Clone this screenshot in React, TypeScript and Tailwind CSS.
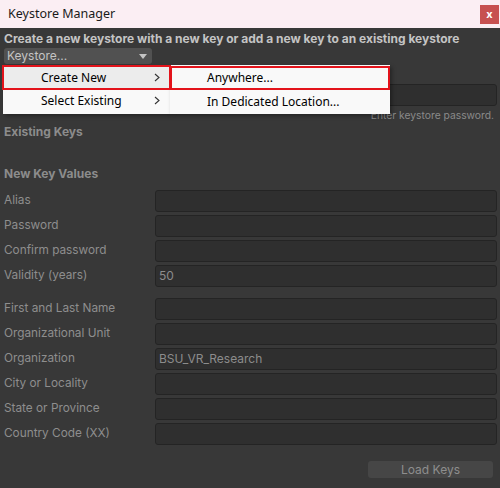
import React from "react";

const fieldsA = [
  { label: "Alias", value: "" },
  { label: "Password", value: "" },
  { label: "Confirm password", value: "" },
  { label: "Validity (years)", value: "50" },
];

const fieldsB = [
  { label: "First and Last Name", value: "" },
  { label: "Organizational Unit", value: "" },
  { label: "Organization", value: "BSU_VR_Research" },
  { label: "City or Locality", value: "" },
  { label: "State or Province", value: "" },
  { label: "Country Code (XX)", value: "" },
];

function Field({ value }: { value?: string }) {
  return (
    <div className="flex-1 h-[22px] rounded-[3px] bg-[#2f2f2f] border border-[#242424] flex items-center px-[3px] text-[12px] text-[#8c8c8c]">
      {value}
    </div>
  );
}

function Row({ label, value }: { label: string; value: string }) {
  return (
    <div className="flex items-center h-[22px]">
      <div className="w-[151px] text-[11.8px] text-[#8e8e8e]">{label}</div>
      <Field value={value} />
    </div>
  );
}

function Chevron() {
  return (
    <svg width="6" height="9" viewBox="0 0 6 9" className="text-[#333]">
      <path d="M1 1 L5 4.5 L1 8" fill="none" stroke="currentColor" strokeWidth="1.1" />
    </svg>
  );
}

export default function App() {
  return (
    <div
      className="w-[500px] h-[488px] bg-[#383838] flex flex-col relative overflow-hidden"
      style={{ fontFamily: "Inter, 'Noto Sans', sans-serif" }}
    >
      {/* title bar */}
      <div className="h-[28px] bg-[#fbeef3] flex items-center justify-between pl-[8px] shrink-0">
        <span className="text-[12.5px] text-[#1a1a1a]" style={{ fontFamily: "'Noto Sans', sans-serif" }}>
          Keystore Manager
        </span>
        <div className="w-[19px] h-[19px] mr-[1px] mt-[1px] bg-[#c75050] flex items-center justify-center text-white text-[11px] font-bold leading-none">
          x
        </div>
      </div>

      <div className="flex flex-col pl-[4px] pr-[3px]">
        <div className="mt-[3px] h-[16px] flex items-center text-[12px] font-bold text-[#c4c4c4] whitespace-nowrap">
          Create a new keystore with a new key or add a new key to an existing keystore
        </div>
        <div className="mt-[1px] w-[148px] h-[16px] rounded-[3px] bg-[#515151] flex items-center justify-between pl-[3px] pr-[5px] text-[12px] text-[#c4c4c4]">
          <span>Keystore...</span>
          <svg width="8" height="5" viewBox="0 0 8 5">
            <path d="M0 0 L8 0 L4 5 Z" fill="#c4c4c4" />
          </svg>
        </div>

        <div className="mt-[20px] flex items-center h-[22px]">
          <div className="w-[151px]" />
          <Field />
        </div>
        <div className="mt-[2px] text-right text-[10.3px] text-[#8a8a8a] pr-[3px] leading-[14px]">
          Enter keystore password.
        </div>

        <div className="mt-[2px] text-[12px] font-bold text-[#8c8c8c] leading-[16px]">Existing Keys</div>

        <div className="mt-[26px] text-[12px] font-bold text-[#8c8c8c] leading-[16px]">New Key Values</div>

        <div className="mt-[8px] flex flex-col gap-[3px]">
          {fieldsA.map((f) => (
            <Row key={f.label} label={f.label} value={f.value} />
          ))}
        </div>

        <div className="mt-[11px] flex flex-col gap-[3px]">
          {fieldsB.map((f) => (
            <Row key={f.label} label={f.label} value={f.value} />
          ))}
        </div>

        <div className="mt-[16px] flex justify-end pr-[4px]">
          <div className="w-[125px] h-[17px] rounded-[3px] bg-[#464646] flex items-center justify-center text-[12px] text-[#8e8e8e]">
            Load Keys
          </div>
        </div>
      </div>

      {/* context menu */}
      <div
        className="absolute left-[3px] top-[65px] flex text-[12px] text-black"
        style={{ fontFamily: "'Noto Sans', sans-serif" }}
      >
        <div className="w-[167px] bg-[#f9f9f9] py-[1px] shadow-[2px_2px_4px_rgba(0,0,0,0.35)] flex flex-col">
          <div className="relative h-[23px] bg-[#ececec] flex items-center pl-[38px] pr-[10px] justify-between">
            <span>Create New</span>
            <Chevron />
            <div className="absolute inset-[-1px] border-2 border-[#e3131b]" />
          </div>
          <div className="h-[23px] flex items-center pl-[38px] pr-[10px] justify-between">
            <span>Select Existing</span>
            <Chevron />
          </div>
        </div>
        <div className="w-[220px] bg-[#f9f9f9] py-[1px] shadow-[2px_2px_4px_rgba(0,0,0,0.35)] flex flex-col">
          <div className="relative h-[24px] flex items-center pl-[37px]">
            <span>Anywhere...</span>
            <div className="absolute inset-0 border-2 border-[#e3131b]" />
          </div>
          <div className="h-[23px] flex items-center pl-[37px]">
            <span>In Dedicated Location...</span>
          </div>
        </div>
      </div>
    </div>
  );
}
